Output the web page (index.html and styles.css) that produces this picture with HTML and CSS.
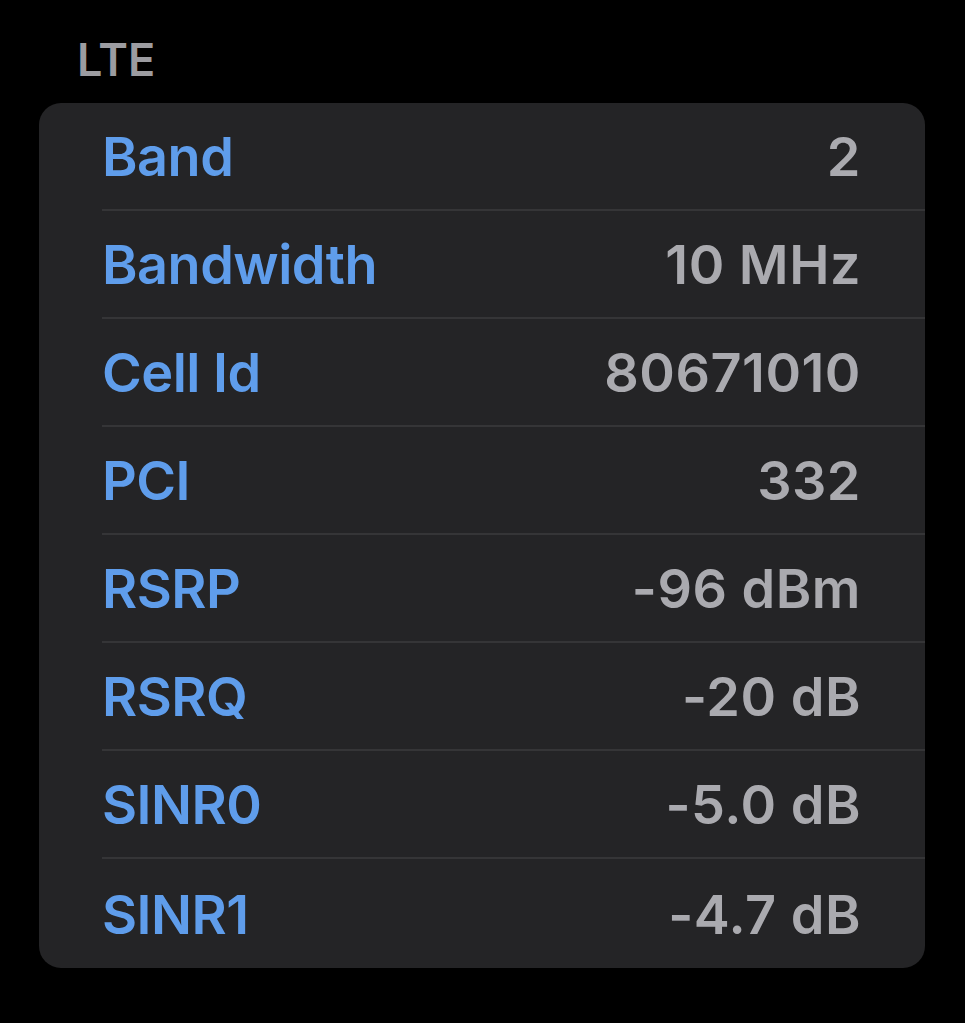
FILE: index.html
```html
<!DOCTYPE html>
<html>
<head>
<meta charset="utf-8">
<link rel="stylesheet" href="styles.css">
</head>
<body>
<div class="screen">
  <div class="section-title">LTE</div>
  <div class="card">
    <div class="row"><span class="label">Band</span><span class="value">2</span></div>
    <div class="row"><span class="label">Bandwidth</span><span class="value">10 MHz</span></div>
    <div class="row"><span class="label">Cell Id</span><span class="value">80671010</span></div>
    <div class="row"><span class="label">PCI</span><span class="value">332</span></div>
    <div class="row"><span class="label">RSRP</span><span class="value">-96 dBm</span></div>
    <div class="row"><span class="label">RSRQ</span><span class="value">-20 dB</span></div>
    <div class="row"><span class="label">SINR0</span><span class="value">-5.0 dB</span></div>
    <div class="row"><span class="label">SINR1</span><span class="value">-4.7 dB</span></div>
  </div>
</div>
</body>
</html>
```
FILE: styles.css
```css
html, body {
  margin: 0;
  padding: 0;
  background: #000;
}
.screen {
  width: 965px;
  height: 1023px;
  padding-top: 38px;
  box-sizing: border-box;
  font-family: Inter, "Liberation Sans", sans-serif;
}
.section-title {
  padding-left: 77px;
  font-size: 45px;
  line-height: 44px;
  font-weight: 600;
  color: #9c9ca1;
}
.card {
  margin: 21px 0 0 39px;
  width: 886px;
  background: #242426;
  border-radius: 22px;
  overflow: hidden;
}
.row {
  display: flex;
  justify-content: space-between;
  align-items: center;
  height: 108px;
  margin-left: 63px;
  padding-right: 64px;
  padding-top: 2px;
  border-bottom: 2px solid #353537;
  box-sizing: border-box;
  font-size: 54px;
  line-height: 54px;
  font-weight: 600;
}
.row:last-child {
  border-bottom: none;
  height: 109px;
}
.label {
  color: #5f9deb;
  letter-spacing: -0.5px;
}
.value {
  color: #aaaaaf;
  letter-spacing: 0.5px;
}
```
